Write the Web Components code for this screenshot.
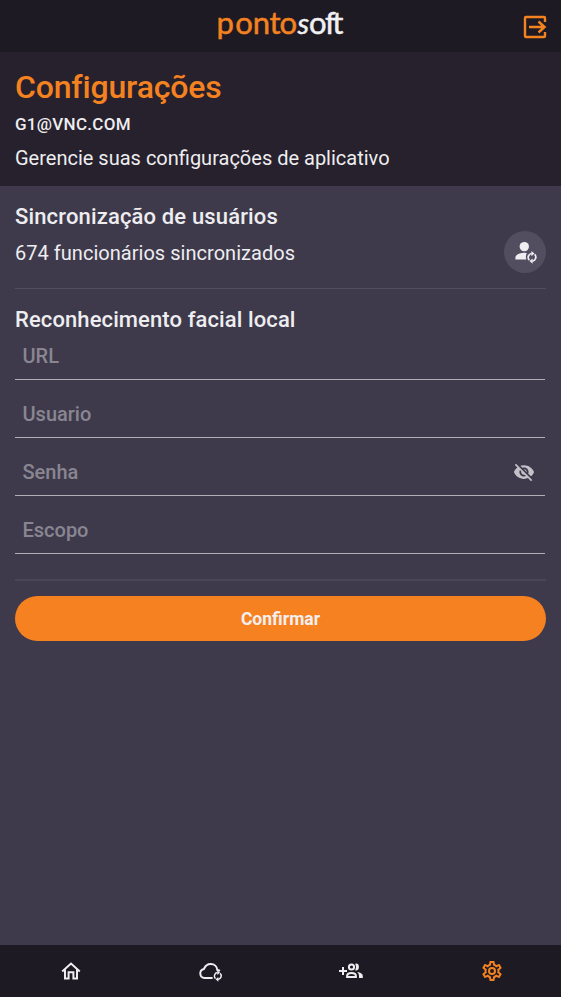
<!DOCTYPE html>
<html lang="pt-BR"><head><meta charset="utf-8"><title>Configurações</title>
<style>html,body{margin:0;height:100%;background:#3e3a4c}body{font-family:Roboto,"Liberation Sans",sans-serif;color:#eeedf0}</style></head>
<body><ponto-app></ponto-app>
<script>
const define=(name,html,setup)=>customElements.define(name,class extends HTMLElement{
  connectedCallback(){
    if(this.shadowRoot)return;
    const t=document.createElement('template');t.innerHTML=html;
    this.attachShadow({mode:'open'}).append(t.content.cloneNode(true));
    if(setup)setup(this,this.shadowRoot);
  }
});
const sync='<g fill="none" stroke="currentColor" stroke-width="1.7"><path d="M-2.6 2.9A3.9 3.9 0 0 1-.3-3.8M2.6-2.9A3.9 3.9 0 0 1 .3 3.8"/></g><path fill="currentColor" d="M-.6-6.4 2.5-3.7-.6-1.1zM.6 6.4-2.5 3.7.6 1.1z"/>';
const icons={
 exit:[24,24,'0 0 24 24','<path fill="none" stroke="currentColor" stroke-width="2.4" stroke-linejoin="round" d="M22 7V3Q22 2 21 2H3Q2 2 2 3V21Q2 22 3 22H21Q22 22 22 21V17"/><path fill="none" stroke="currentColor" stroke-width="2.5" d="M6 12H21.5M15.5 6.5 21.5 12 15.5 17.5"/>'],
 user:[24,22,'0 0 24 22','<g fill="currentColor"><circle cx="9.3" cy="5.6" r="4.7"/><path d="M.4 18.6V16.8C.4 13.3 5.6 11.8 9.4 11.8Q10.7 11.8 11.8 12 10.2 15.4 11.4 18.6z"/></g><g transform="translate(17 16.3)">'+sync+'</g>'],
 eye:[22,22,'0 0 24 24','<path fill="currentColor" d="M12 7c2.76 0 5 2.24 5 5 0 .65-.13 1.26-.36 1.83l2.92 2.92c1.51-1.26 2.7-2.89 3.43-4.75-1.73-4.39-6-7.5-11-7.5-1.4 0-2.74.25-3.98.7l2.16 2.16C10.74 7.13 11.35 7 12 7zM2 4.27l2.28 2.28.46.46C3.08 8.3 1.78 10.02 1 12c1.73 4.39 6 7.5 11 7.5 1.55 0 3.03-.3 4.38-.84l.42.42L19.73 22 21 20.73 3.27 3 2 4.27zM7.53 9.8l1.55 1.55c-.05.21-.08.43-.08.65 0 1.66 1.34 3 3 3 .22 0 .44-.03.65-.08l1.55 1.55c-.67.33-1.41.53-2.2.53-2.76 0-5-2.24-5-5 0-.79.2-1.53.53-2.2zm4.31-.78l3.15 3.15.02-.16c0-1.66-1.34-3-3-3l-.17.01z"/>'],
 home:[20,18,'0 0 20 18','<path fill="none" stroke="currentColor" stroke-width="2" d="M1.2 9.4 10 1.6 18.8 9.4M4 7.5V16.6H7.6V10.3H12.4V16.6H16V7.5"/>'],
 cloud:[24,20,'0 0 24 20','<path fill="none" stroke="currentColor" stroke-width="2" d="M13.6 16H5.6A4.6 4.6 0 0 1 5 6.9C6.2 3.9 8.5 2 11.7 2 15.4 2 18 4.6 18.3 8L21 8.8"/><g transform="translate(18.8 14) scale(.9)">'+sync+'</g>'],
 group:[24,16,'0 0 24 16','<g fill="none" stroke="currentColor" stroke-width="2"><path d="M4 4V12M0 8H8"/><circle cx="12.5" cy="4" r="2.6"/><path d="M8.1 14V12.9C8.1 8.9 16.9 8.9 16.9 12.9V14z"/></g><path fill="currentColor" d="M16.2.7Q19.9.1 19.9 4T16.2 7.4Q18 4 16.2.7M18.2 8.9Q23.8 9.7 23.8 13V15H20V12.8Q20 10.5 18.2 8.9"/>'],
 gear:[24,24,'0 0 24 24','<path fill="currentColor" d="M12,8A4,4 0 0,1 16,12A4,4 0 0,1 12,16A4,4 0 0,1 8,12A4,4 0 0,1 12,8M12,10A2,2 0 0,0 10,12A2,2 0 0,0 12,14A2,2 0 0,0 14,12A2,2 0 0,0 12,10M10,22C9.75,22 9.54,21.82 9.5,21.58L9.13,18.93C8.5,18.68 7.96,18.34 7.44,17.94L4.95,18.95C4.73,19.03 4.46,18.95 4.34,18.73L2.34,15.27C2.21,15.05 2.27,14.78 2.46,14.63L4.57,12.97L4.5,12L4.57,11L2.46,9.37C2.27,9.22 2.21,8.95 2.34,8.73L4.34,5.27C4.46,5.05 4.73,4.96 4.95,5.05L7.44,6.05C7.96,5.66 8.5,5.32 9.13,5.07L9.5,2.42C9.54,2.18 9.75,2 10,2H14C14.25,2 14.46,2.18 14.5,2.42L14.87,5.07C15.5,5.32 16.04,5.66 16.56,6.05L19.05,5.05C19.27,4.96 19.54,5.05 19.66,5.27L21.66,8.73C21.79,8.95 21.73,9.22 21.54,9.37L19.43,11L19.5,12L19.43,13L21.54,14.63C21.73,14.78 21.79,15.05 21.66,15.27L19.66,18.73C19.54,18.95 19.27,19.04 19.05,18.95L16.56,17.95C16.04,18.34 15.5,18.68 14.87,18.93L14.5,21.58C14.46,21.82 14.25,22 14,22H10M11.25,4L10.88,6.61C9.68,6.86 8.62,7.5 7.85,8.39L5.44,7.35L4.69,8.65L6.8,10.2C6.4,11.37 6.4,12.64 6.8,13.8L4.68,15.36L5.43,16.66L7.86,15.62C8.63,16.5 9.68,17.14 10.87,17.38L11.24,20H12.76L13.13,17.39C14.32,17.14 15.37,16.5 16.14,15.62L18.57,16.66L19.32,15.36L17.2,13.81C17.6,12.64 17.6,11.37 17.2,10.2L19.31,8.65L18.56,7.35L16.15,8.39C15.38,7.5 14.32,6.86 13.12,6.62L12.75,4H11.25Z"/>']
};
define('ponto-icon','<style>:host{display:block;flex:none}svg{display:block;overflow:visible}</style>',(el,root)=>{
  const [w,h,v,b]=icons[el.getAttribute('name')];
  root.innerHTML+=`<svg width="${w}" height="${h}" viewBox="${v}">${b}</svg>`;
});
define('ponto-logo',`<style>:host{display:block}svg{display:block;overflow:visible}text{font:400 31px Lato,sans-serif;stroke-width:.5px}</style>
<svg width="130" height="52" viewBox="-2 0 130 52"><text y="34" x="-1.5 17.2 34.7 51.6 61.5" fill="#f58220" stroke="#f58220">ponto</text><text y="34" x="79.6 91 107 114.3" fill="#f0eff2" stroke="#f0eff2"><tspan font-style="italic" font-size="29">s</tspan>oft</text></svg>`);
define('ponto-topbar',`<style>:host{display:grid;grid-template-columns:1fr auto 1fr;height:52px;background:#1d1a23;align-items:center;box-sizing:border-box;padding:0 14px 0 14px}
ponto-logo{grid-column:2}ponto-icon{justify-self:end;color:#f58220;padding:1px .5px 0 0}</style><ponto-logo></ponto-logo><ponto-icon name="exit"></ponto-icon>`);
define('ponto-hero',`<style>:host{display:block;height:134px;background:#26212c;box-sizing:border-box;padding:15px 15px 0}
h1{margin:0;font:500 32px/40px Roboto,sans-serif;color:#f58220;letter-spacing:-.17px;font-variant-ligatures:none}
.mail{font:500 17px/24px Roboto,sans-serif;margin-top:5px;letter-spacing:.28px}.sub{font-size:20px;line-height:28px;margin-top:8px}</style>
<h1><slot name="title"></slot></h1><div class="mail"><slot name="mail"></slot></div><div class="sub"><slot></slot></div>`);
define('ponto-sync',`<style>:host{display:flex;height:103px;box-sizing:border-box;border-bottom:1px solid #524e5e;justify-content:space-between}
h2{margin:16px 0 0;font:500 22px/30px Roboto,sans-serif;letter-spacing:.15px}p{margin:7px 0 0;font-size:20px;line-height:28px;letter-spacing:.03px}
button{border:0;padding:0 0 0 3px;width:42px;height:42px;border-radius:50%;background:#524e60;color:#eeedf0;display:grid;place-items:center;margin-top:44.5px}</style>
<div><h2><slot name="title"></slot></h2><p><slot></slot></p></div><button aria-label="Sincronizar"><ponto-icon name="user"></ponto-icon></button>`);
define('ponto-field',`<style>:host{display:flex;align-items:center;box-sizing:border-box;height:58px;border-bottom:1px solid #b2b0b7;padding:10px 10.5px 0 7.5px;justify-content:space-between;color:#898691;font:500 20px/28px Roboto,sans-serif;margin-right:1px}
::slotted(ponto-icon){color:#c4c2c8}</style><span></span><slot></slot>`,(el,root)=>{root.querySelector('span').textContent=el.getAttribute('label')});
define('ponto-form',`<style>:host{display:block}h2{margin:16px 0 0;font:500 22px/30px Roboto,sans-serif;letter-spacing:.1px}
.fields{margin-top:-13px}hr{border:0;height:2px;background:#4a4657;margin:25px 0 15px}
button{display:block;width:100%;height:45px;border:0;border-radius:23px;background:#f68121;color:#f3eff1;font:700 17.5px/24px Roboto,sans-serif;padding:1px 0 0}</style>
<h2><slot name="title"></slot></h2><div class="fields"><slot></slot></div><hr><button>Confirmar</button>`);
define('ponto-nav',`<style>:host{display:grid;grid-template-columns:repeat(4,1fr);height:52px;background:#1d1a23;place-items:center;color:#eeedf0}ponto-icon{padding-left:1.5px}[name=cloud]{padding-top:2px}.on{color:#f58220}</style>
<ponto-icon name="home"></ponto-icon><ponto-icon name="cloud"></ponto-icon><ponto-icon name="group"></ponto-icon><ponto-icon class="on" name="gear"></ponto-icon>`);
define('ponto-app',`<style>:host{display:flex;flex-direction:column;height:997px;background:#3e3a4c}main{flex:1;padding:0 15px}</style>
<ponto-topbar></ponto-topbar>
<ponto-hero><span slot="title">Configurações</span><span slot="mail">G1@VNC.COM</span>Gerencie suas configurações de aplicativo</ponto-hero>
<main><ponto-sync><span slot="title">Sincronização de usuários</span>674 funcionários sincronizados</ponto-sync>
<ponto-form><span slot="title">Reconhecimento facial local</span><ponto-field label="URL"></ponto-field><ponto-field label="Usuario"></ponto-field><ponto-field label="Senha"><ponto-icon name="eye"></ponto-icon></ponto-field><ponto-field label="Escopo"></ponto-field></ponto-form></main>
<ponto-nav></ponto-nav>`);
</script></body></html>
